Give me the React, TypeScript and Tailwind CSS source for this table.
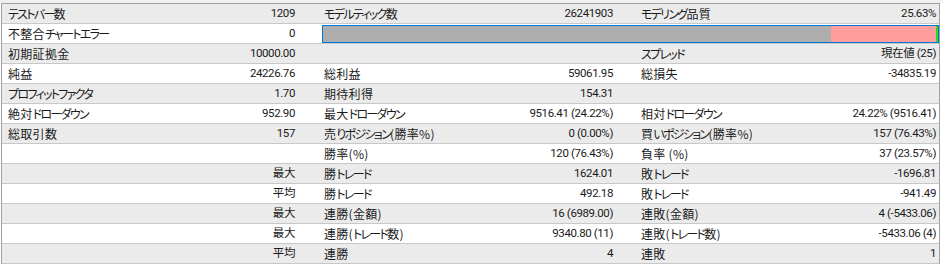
import React from "react";

type Row = {
  cells: [string, string, string, string, string, string];
  bar?: boolean;
};

const rows: Row[] = [
  { cells: ["テストバー数", "1209", "モデルティック数", "26241903", "モデリング品質", "25.63%"] },
  { cells: ["不整合チャートエラー", "0", "", "", "", ""], bar: true },
  { cells: ["初期証拠金", "10000.00", "", "", "スプレッド", "現在値 (25)"] },
  { cells: ["純益", "24226.76", "総利益", "59061.95", "総損失", "-34835.19"] },
  { cells: ["プロフィットファクタ", "1.70", "期待利得", "154.31", "", ""] },
  { cells: ["絶対ドローダウン", "952.90", "最大ドローダウン", "9516.41 (24.22%)", "相対ドローダウン", "24.22% (9516.41)"] },
  { cells: ["総取引数", "157", "売りポジション(勝率%)", "0 (0.00%)", "買いポジション(勝率%)", "157 (76.43%)"] },
  { cells: ["", "", "勝率(%)", "120 (76.43%)", "負率 (%)", "37 (23.57%)"] },
  { cells: ["", "最大", "勝トレード", "1624.01", "敗トレード", "-1696.81"] },
  { cells: ["", "平均", "勝トレード", "492.18", "敗トレード", "-941.49"] },
  { cells: ["", "最大", "連勝(金額)", "16 (6989.00)", "連敗(金額)", "4 (-5433.06)"] },
  { cells: ["", "最大", "連勝(トレード数)", "9340.80 (11)", "連敗(トレード数)", "-5433.06 (4)"] },
  { cells: ["", "平均", "連勝", "4", "連敗", "1"] },
];

const KANA = /([\u3040-\u30FF]+)/;

const L = ({ t }: { t: string }) => (
  <span className="whitespace-nowrap [font-feature-settings:'palt']">
    {t.split(KANA).map((p, i) =>
      KANA.test(p) ? (
        <span key={i} className="tracking-[-1.7px]">{p}</span>
      ) : (
        <span key={i} className="tracking-[0.3px]">{p}</span>
      )
    )}
  </span>
);

const V = ({ t }: { t: string }) => (
  <span className="whitespace-nowrap text-[11.5px] tracking-[-0.4px] [font-family:Roboto,'Noto_Sans_CJK_JP',sans-serif]">{t}</span>
);

export default function App() {
  return (
    <div className="w-[943px] h-[266px] bg-white overflow-hidden text-[12px] leading-[19px] text-[#1a1a1a] [font-family:'Noto_Sans_CJK_JP','Noto_Sans',sans-serif]">
      <div className="h-[3px] bg-[#f0f0f0]" />
      <div className="ml-[1px] w-[939px] border-t border-l border-r border-[#a0a0a0]">
        {rows.map((r, i) => (
          <div
            key={i}
            className={
              "flex h-[20px] border-b border-[#c8c8c8] " +
              (i % 2 === 0 ? "bg-[#ebebeb]" : "bg-white")
            }
          >
            <div className="w-[300px] flex justify-between pl-[6px] pr-[7px]">
              <L t={r.cells[0]} />
              <V t={r.cells[1]} />
            </div>
            {r.bar ? (
              <div className="flex-1 pl-[20px] pt-[1px]">
                <div className="h-[18px] border border-[#0078d7] flex">
                  <div className="w-[508px] bg-[#adadad]" />
                  <div className="flex-1 bg-[#ff9c9c]" />
                  <div className="w-[2px] bg-[#22dd22]" />
                </div>
              </div>
            ) : (
              <>
                <div className="w-[318px] flex justify-between pl-[22px] pr-[7px]">
                  <L t={r.cells[2]} />
                  <V t={r.cells[3]} />
                </div>
                <div className="flex-1 flex justify-between pl-[21px] pr-[3px]">
                  <L t={r.cells[4]} />
                  <V t={r.cells[5]} />
                </div>
              </>
            )}
          </div>
        ))}
      </div>
    </div>
  );
}
